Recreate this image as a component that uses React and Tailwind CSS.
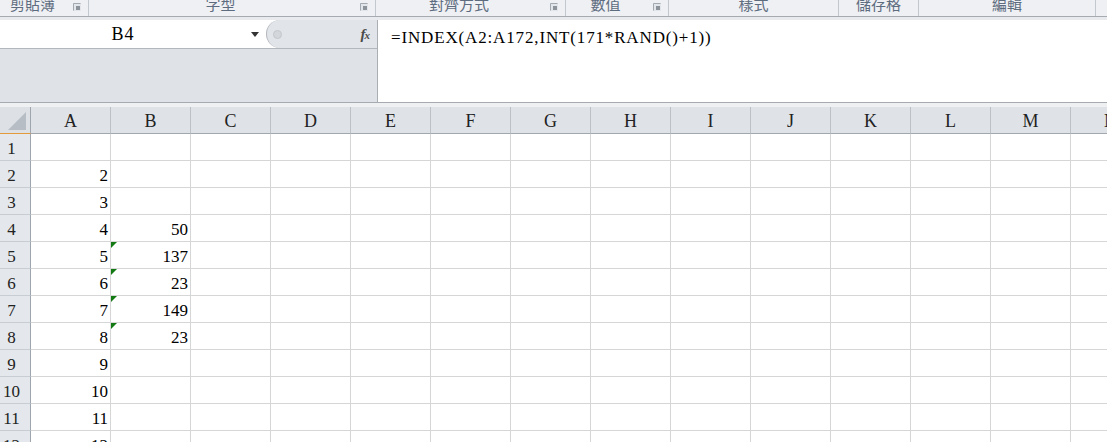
import React from 'react';

const groups = [
  { label: '剪貼簿', w: 'w-[89px]', launcher: true },
  { label: '字型', w: 'w-[287px]', launcher: true },
  { label: '對齊方式', w: 'w-[190px]', launcher: true },
  { label: '數值', w: 'w-[103px]', launcher: true },
  { label: '樣式', w: 'w-[170px]', launcher: false },
  { label: '儲存格', w: 'w-[80px]', launcher: false },
  { label: '編輯', w: 'w-[177px]', launcher: false },
];

const cols = ['A', 'B', 'C', 'D', 'E', 'F', 'G', 'H', 'I', 'J', 'K', 'L', 'M', 'N'];

const rows = [
  { n: 1 },
  { n: 2, a: 2 },
  { n: 3, a: 3 },
  { n: 4, a: 4, b: 50 },
  { n: 5, a: 5, b: 137, flag: true },
  { n: 6, a: 6, b: 23, flag: true },
  { n: 7, a: 7, b: 149, flag: true },
  { n: 8, a: 8, b: 23, flag: true },
  { n: 9, a: 9 },
  { n: 10, a: 10 },
  { n: 11, a: 11 },
  { n: 12, a: 12 },
];

const cjk = "font-['Noto_Sans_CJK_TC','Noto_Sans',sans-serif]";
const serif = "font-['Liberation_Serif','Noto_Sans_CJK_TC',serif]";

const Launcher = () => (
  <svg width="8" height="8" viewBox="0 0 8 8" className="shrink-0">
    <rect x="0" y="0" width="8" height="8" fill="#e2e5e9" />
    <path d="M0.5 7.5V0.5H7.5" stroke="#a3a9b0" fill="none" />
    <rect x="3" y="3" width="4" height="4" fill="#8c939b" />
  </svg>
);

const Cell = ({ value, flag }) => (
  <div className="relative w-[80px] shrink-0 border-r border-b border-[#d6d6d6] flex items-center justify-end pr-[2px] pt-[2px]">
    {flag && (
      <svg width="6" height="6" viewBox="0 0 6 6" className="absolute left-0 top-0">
        <path d="M0 0H6L0 6Z" fill="#137a13" />
      </svg>
    )}
    {value != null && <span className={`${serif} text-[17px] leading-none text-black`}>{value}</span>}
  </div>
);

export default function App() {
  return (
    <div className="w-[1107px] h-[442px] overflow-hidden bg-white flex flex-col">
      {/* Ribbon group labels */}
      <div className="flex h-[17px] shrink-0 bg-[#eef0f3] border-b border-[#a6abb1] overflow-hidden">
        {groups.map((g) => (
          <div key={g.label} className={`${g.w} shrink-0 flex border-r border-[#c3c8ce] h-full`}>
            <div className="flex-1 flex justify-center overflow-hidden">
              <span className={`${cjk} text-[15px] leading-[15px] -mt-[4px] text-[#5e6c80]`}>{g.label}</span>
            </div>
            {g.launcher && (
              <div className="pt-[3px] pr-[7px] pl-[8px]">
                <Launcher />
              </div>
            )}
          </div>
        ))}
        <div className="flex-1" />
      </div>
      <div className="h-[3px] shrink-0 bg-[#e8eaed]" />

      {/* Name box + formula bar */}
      <div className="flex h-[83px] shrink-0 border-b border-[#a6abb1]">
        <div className="w-[378px] shrink-0 flex flex-col bg-[#dfe2e7] border-r border-[#a9aeb4]">
          <div className="flex h-[29px] bg-white border-b border-[#b2b7bd]">
            <div className="w-[246px] flex items-center justify-center">
              <span className={`${serif} text-[18px] tracking-[1px] text-black pt-[1px]`}>B4</span>
            </div>
            <div className="w-[20px] flex items-center pl-[5px]">
              <svg width="8" height="5" viewBox="0 0 8 5">
                <path d="M0 0H8L4 5Z" fill="#333" />
              </svg>
            </div>
            <div className="flex-1 flex items-center bg-[#e1e4e8] rounded-l-[14px] border-l border-[#b3b8be]">
              <div className="ml-[6px] w-[9px] h-[9px] rounded-full bg-[#d3d7dc] border border-[#c2c7cd]" />
              <div className="flex-1" />
              <span className="font-['Liberation_Serif',serif] italic font-bold text-[15px] text-[#4a4a4a] mr-[8px] tracking-[-1px]">
                f<span className="text-[11px]">x</span>
              </span>
            </div>
          </div>
        </div>
        <div className="flex-1 bg-white pl-[13px] pt-[5px]">
          <span className={`${serif} text-[17px] tracking-[0.85px] leading-[24px] text-black`}>
            =INDEX(A2:A172,INT(171*RAND()+1))
          </span>
        </div>
      </div>
      <div className="h-[4px] shrink-0 bg-[#eef0f2]" />

      {/* Sheet grid */}
      <div className="flex flex-col">
        <div className="flex h-[27px] shrink-0">
          <div className="relative w-[31px] shrink-0 bg-[#dde1e6] border-r border-b border-r-[#9ea5ad] border-b-[#e39a3b]">
            <svg width="18" height="18" viewBox="0 0 18 18" className="absolute right-[4px] bottom-[3px]">
              <path d="M18 0V18H0Z" fill="#b7bdc4" />
            </svg>
          </div>
          {cols.map((c) => (
            <div
              key={c}
              className="w-[80px] shrink-0 bg-[#dfe3e8] border-r border-b border-r-[#bcc1c8] border-b-[#a1a8b0] flex items-center justify-center pt-[2px]"
            >
              <span className={`${serif} text-[18px] leading-none text-[#222]`}>{c}</span>
            </div>
          ))}
        </div>
        {rows.map((r) => (
          <div key={r.n} className="flex h-[27px] shrink-0">
            <div className="w-[31px] shrink-0 bg-[#e4e7eb] border-r border-b border-r-[#9ea5ad] border-b-[#c8cdd3] flex items-center justify-center pr-[7px] pt-[2px]">
              <span className={`${serif} text-[17px] leading-none text-[#222]`}>{r.n}</span>
            </div>
            <Cell value={r.a} />
            <Cell value={r.b} flag={r.flag} />
            {cols.slice(2).map((c) => (
              <Cell key={c} />
            ))}
          </div>
        ))}
      </div>
    </div>
  );
}
